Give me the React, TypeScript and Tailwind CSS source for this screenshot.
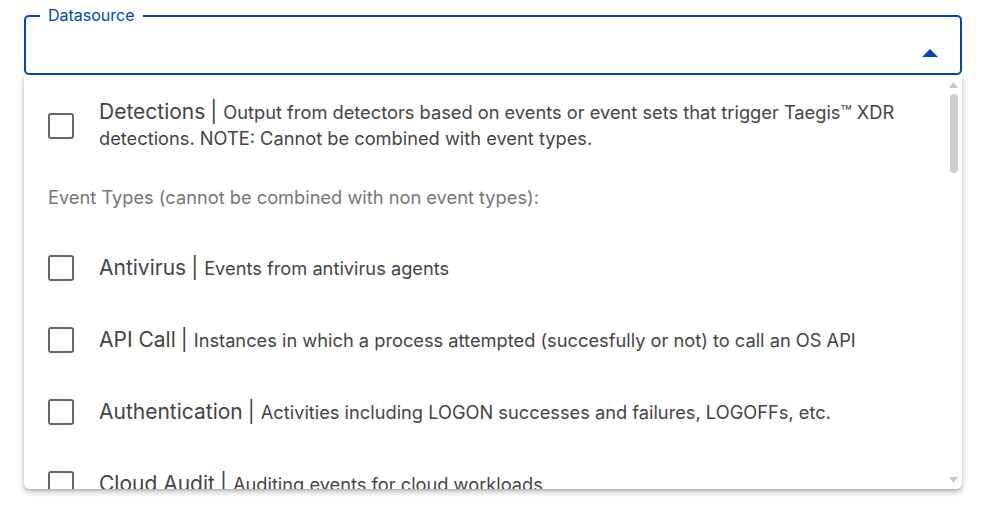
import React from "react";

const eventTypes = [
  { title: "Antivirus", desc: "Events from antivirus agents" },
  {
    title: "API Call",
    desc: "Instances in which a process attempted (succesfully or not) to call an OS API",
  },
  {
    title: "Authentication",
    desc: "Activities including LOGON successes and failures, LOGOFFs, etc.",
  },
  { title: "Cloud Audit", desc: "Auditing events for cloud workloads" },
];

function Checkbox() {
  return (
    <div className="w-[26px] h-[26px] flex-shrink-0 rounded-[3px] border-[2.5px] border-[#666666] bg-white"></div>
  );
}

function Option({ title, desc }: { title: string; desc: string }) {
  return (
    <div className="flex items-center h-[72px] pl-[24px] pr-[40px]">
      <Checkbox />
      <div className="ml-[25px] text-[#444444] leading-[25px] whitespace-nowrap">
        <span className="text-[21px]">{title}</span>
        <span className="text-[21px] ml-[5px] mr-[6px] text-[#3f4550]">|</span>
        <span className="text-[18.25px]">{desc}</span>
      </div>
    </div>
  );
}

export default function App() {
  return (
    <div className="w-[983px] h-[506px] bg-white font-['Inter',sans-serif] overflow-hidden">
      <div className="pl-[24px] pr-[21px] pt-[6px]">
        <fieldset className="relative h-[69px] border-[2.5px] border-[#0047bb] rounded-[5px] px-[14px]">
          <legend className="px-[8px] text-[16px] leading-[19px] text-[#0047bb]">
            Datasource
          </legend>
          <svg
            className="absolute right-[22px] top-[24px]"
            width="16"
            height="8"
            viewBox="0 0 16 8"
          >
            <polygon points="0,8 8,0 16,8" fill="#0047bb" />
          </svg>
        </fieldset>

        <div className="relative h-[414px] w-[938px] bg-white rounded-b-[5px] shadow-[0_3px_6px_rgba(0,0,0,0.25),0_1px_2px_rgba(0,0,0,0.15)] overflow-hidden">
          <div className="pt-[24px]">
            <div className="flex items-center pl-[24px] pr-[40px]">
              <Checkbox />
              <div className="ml-[25px] text-[#444444] leading-[25px]">
                <span className="text-[21px]">Detections</span>
                <span className="text-[21px] ml-[5px] mr-[6px] text-[#3f4550]">|</span>
                <span className="text-[18.25px]">
                  Output from detectors based on events or event sets that trigger Taegis™ XDR
                  detections. NOTE: Cannot be combined with event types.
                </span>
              </div>
            </div>

            <div className="mt-[33px] pl-[24px] text-[18.25px] leading-[25px] text-[#767676]">
              Event Types (cannot be combined with non event types):
            </div>

            <div className="mt-[22px]">
              {eventTypes.map((item) => (
                <Option key={item.title} title={item.title} desc={item.desc} />
              ))}
            </div>
          </div>

          {/* scrollbar */}
          <div className="absolute right-[4px] top-0 bottom-0 w-[9px]">
            <svg className="absolute top-[7px] left-0" width="9" height="6" viewBox="0 0 9 6">
              <polygon points="0,6 4.5,0 9,6" fill="#c9c9c9" />
            </svg>
            <div className="absolute top-[19px] left-[0.5px] w-[8px] h-[79px] rounded-full bg-[#cdcdcd]"></div>
            <svg className="absolute bottom-[6px] left-0" width="9" height="6" viewBox="0 0 9 6">
              <polygon points="0,0 9,0 4.5,6" fill="#c9c9c9" />
            </svg>
          </div>
        </div>
      </div>
    </div>
  );
}
